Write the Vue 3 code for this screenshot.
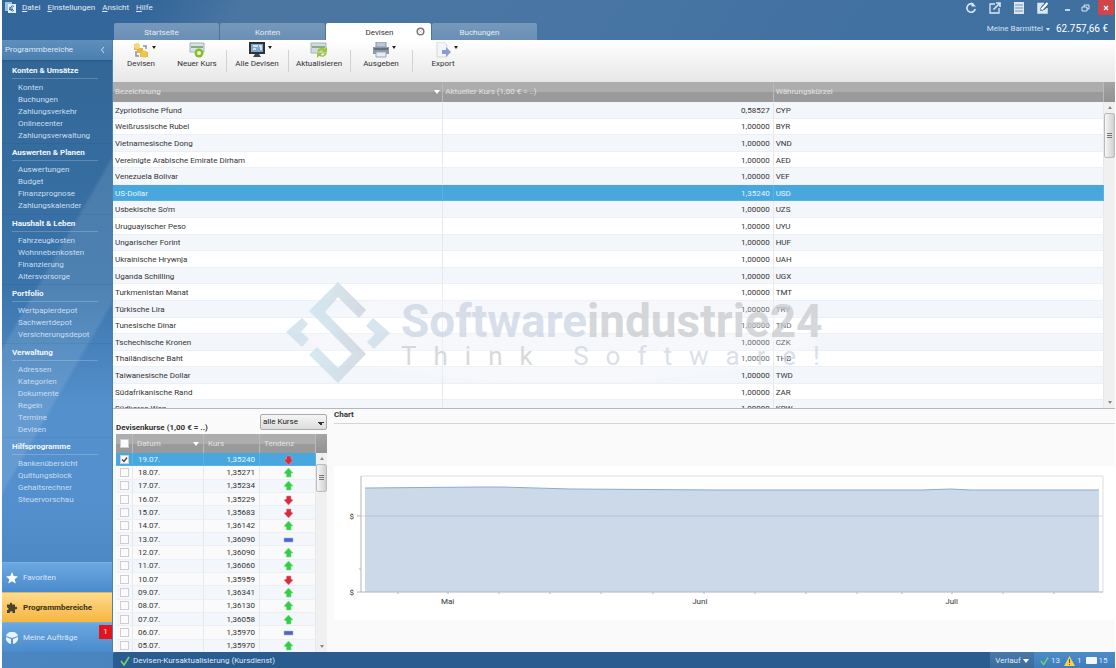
<script setup>
import { ref } from 'vue'

const menus = [['D', 'atei'], ['E', 'instellungen'], ['A', 'nsicht'], ['H', 'ilfe']]
const tabs = ['Startseite', 'Konten', 'Devisen', 'Buchungen']
const groups = [
  { title: 'Konten & Umsätze', items: ['Konten', 'Buchungen', 'Zahlungsverkehr', 'Onlinecenter', 'Zahlungsverwaltung'] },
  { title: 'Auswerten & Planen', items: ['Auswertungen', 'Budget', 'Finanzprognose', 'Zahlungskalender'] },
  { title: 'Haushalt & Leben', items: ['Fahrzeugkosten', 'Wohnnebenkosten', 'Finanzierung', 'Altersvorsorge'] },
  { title: 'Portfolio', items: ['Wertpapierdepot', 'Sachwertdepot', 'Versicherungsdepot'] },
  { title: 'Verwaltung', items: ['Adressen', 'Kategorien', 'Dokumente', 'Regeln', 'Termine', 'Devisen'] },
  { title: 'Hilfsprogramme', items: ['Bankenübersicht', 'Quittungsblock', 'Gehaltsrechner', 'Steuervorschau'] },
]
const tools = [
  { id: 'coins', label: 'Devisen', menu: true },
  { id: 'new', label: 'Neuer Kurs' },
  { id: 'screen', label: 'Alle Devisen', menu: true },
  { id: 'refresh', label: 'Aktualisieren' },
  { id: 'print', label: 'Ausgeben', menu: true },
  { id: 'export', label: 'Export', menu: true },
]
const currencies = [
  ['Zypriotische Pfund', '0,58527', 'CYP'],
  ['Weißrussische Rubel', '1,00000', 'BYR'],
  ['Vietnamesische Dong', '1,00000', 'VND'],
  ['Vereinigte Arabische Emirate Dirham', '1,00000', 'AED'],
  ['Venezuela Bolivar', '1,00000', 'VEF'],
  ['US-Dollar', '1,35240', 'USD'],
  ["Usbekische So'm", '1,00000', 'UZS'],
  ['Uruguayischer Peso', '1,00000', 'UYU'],
  ['Ungarischer Forint', '1,00000', 'HUF'],
  ['Ukrainische Hrywnja', '1,00000', 'UAH'],
  ['Uganda Schilling', '1,00000', 'UGX'],
  ['Turkmenistan Manat', '1,00000', 'TMT'],
  ['Türkische Lira', '1,00000', 'TRY'],
  ['Tunesische Dinar', '1,00000', 'TND'],
  ['Tschechische Kronen', '1,00000', 'CZK'],
  ['Thailändische Baht', '1,00000', 'THB'],
  ['Taiwanesische Dollar', '1,00000', 'TWD'],
  ['Südafrikanische Rand', '1,00000', 'ZAR'],
  ['Südkorea Won', '1,00000', 'KRW'],
]
const rates = ref([
  ['19.07.', '1,35240', 'down', true],
  ['18.07.', '1,35271', 'up', false],
  ['17.07.', '1,35234', 'up', false],
  ['16.07.', '1,35229', 'down', false],
  ['15.07.', '1,35683', 'down', false],
  ['14.07.', '1,36142', 'up', false],
  ['13.07.', '1,36090', 'flat', false],
  ['12.07.', '1,36090', 'up', false],
  ['11.07.', '1,36060', 'up', false],
  ['10.07', '1,35959', 'down', false],
  ['09.07.', '1,36341', 'up', false],
  ['08.07.', '1,36130', 'up', false],
  ['07.07.', '1,36058', 'up', false],
  ['06.07.', '1,35970', 'flat', false],
  ['05.07.', '1,35970', 'up', false],
].map(([date, rate, trend, checked]) => ({ date, rate, trend, checked })))
const ticks = [37, 87, 138, 189, 240, 292, 343, 394, 445, 496, 541, 591, 642, 693]
const selectedCurrency = ref('USD')
</script>

<template>
  <div class="window">
    <header class="top">
      <div class="titlebar">
        <svg class="logo" width="13" height="13" viewBox="0 0 13 13">
          <path d="M1 1h7v9H1z" fill="#9fc0df" /><path d="M4 3h8v9H4z" fill="#e6f0f8" />
          <path d="M10 5.500a2.500 2.500 0 1 0 0 4M5 7h4M5 8.500h4" fill="none" stroke="#3774ae" />
        </svg>
        <nav class="menu">
          <button v-for="m in menus" :key="m[0]" type="button"><u>{{ m[0] }}</u>{{ m[1] }}</button>
        </nav>
        <div class="actions">
          <button type="button" aria-label="Aktualisieren">
            <svg width="12" height="12" viewBox="0 0 12 12"><path d="M8.500 2.500A4.200 4.200 0 1 0 10.200 7" fill="none" stroke="#dbe8f3" stroke-width="1.600" /><path d="M6.500 0v4.500H11z" fill="#dbe8f3" /></svg>
          </button>
          <button type="button" aria-label="In neuem Fenster">
            <svg width="12" height="12" viewBox="0 0 12 12"><path d="M6 2H1v9h9V6" fill="none" stroke="#dbe8f3" stroke-width="1.300" /><path d="M4.500 7.500 10 2M7 1h4v4" fill="none" stroke="#dbe8f3" stroke-width="1.600" /></svg>
          </button>
          <button type="button" aria-label="Liste">
            <svg width="12" height="12" viewBox="0 0 12 12"><path d="M1 0h10v12H1z" fill="#dbe8f3" /><path d="M2 3h8M2 6h8M2 9h8" stroke="#6f94b8" /></svg>
          </button>
          <button type="button" aria-label="Bearbeiten">
            <svg width="12" height="12" viewBox="0 0 12 12"><path d="M7 1.500H1v9.500h9V6" fill="none" stroke="#dbe8f3" stroke-width="1.500" /><path d="M1 1h6L4 5 3 9l4-1 3-2v5H1z" fill="#dbe8f3" /><path d="m4.500 7.500 6-6.500" stroke="#4472a0" stroke-width="3.500" /><path d="m4.500 7.500 6-6.500" stroke="#fff" stroke-width="2" /></svg>
          </button>
          <button class="min" type="button" aria-label="Minimieren"><svg width="8" height="10" viewBox="0 0 8 10"><path d="M1 7h5" stroke="#e5eef6" stroke-width="1.600" /></svg></button>
          <button type="button" aria-label="Wiederherstellen"><svg width="9" height="10" viewBox="0 0 9 10"><path d="M1 4h5v4H1zM3 4V2h5v4H6" fill="none" stroke="#dbe8f3" /></svg></button>
          <button class="close" type="button" aria-label="Schließen"><svg width="8" height="8" viewBox="0 0 8 8"><path d="m2 2 4 4M6 2 2 6" stroke="#fff" stroke-width="1.300" /></svg></button>
        </div>
      </div>
      <div class="tabrow">
        <div class="tabs" role="tablist">
          <button v-for="t in tabs" :key="t" type="button" role="tab" :class="{ active: t === 'Devisen' }">
            {{ t }}
            <svg v-if="t === 'Devisen'" class="tabclose" width="9" height="9" viewBox="0 0 9 9"><circle cx="4.500" cy="4.500" r="3.300" fill="#fff" stroke="#777" stroke-width="1.500" /><path d="m3.500 3.500 2 2M5.500 3.500l-2 2" stroke="#bbb" /></svg>
          </button>
        </div>
        <button class="cash" type="button">Meine Barmittel <i class="tri"></i><b>62.757,66 €</b></button>
      </div>
    </header>

    <aside class="side">
      <div class="sidehead">Programmbereiche <svg width="6" height="8" viewBox="0 0 6 8"><path d="M4 1 1.500 4 4 7" fill="none" stroke="#cfe0ef" /></svg></div>
      <nav class="groups">
        <section v-for="g in groups" :key="g.title">
          <h2>{{ g.title }}</h2>
          <a v-for="i in g.items" :key="i" href="#">{{ i }}</a>
        </section>
      </nav>
      <div class="switch">
        <button type="button"><svg width="12" height="12" viewBox="0 0 12 12"><path d="m6 0 1.700 4 4.300.4-3.300 2.800 1 4.300L6 9.200l-3.700 2.300 1-4.300L0 4.400 4.300 4z" fill="#fff" /></svg>Favoriten</button>
        <button class="on" type="button"><svg width="12" height="12" viewBox="0 0 12 12"><path d="M1 2.500h3C3 0 7 0 6 2.500h3V5c3-1 3 3 0 2.300V11H6.500C7.500 8.500 3 8.500 4 11H1V8c2 .5 2-3 0-2.500z" fill="#4b442d" /></svg>Programmbereiche</button>
        <button type="button"><svg width="12" height="12" viewBox="0 0 12 12"><path d="M6 0a6 6 0 0 1 6 4L6 6 0 4a6 6 0 0 1 6-4zM0 5l5 2v5a6 6 0 0 1-5-7zM12 5 7 7v5a6 6 0 0 0 5-7z" fill="#eaf3fb" /></svg>Meine Aufträge<em>1</em></button>
      </div>
    </aside>

    <main class="main">
      <div class="toolbar">
        <button v-for="t in tools" :key="t.id" type="button">
          <span class="ico">
            <svg width="18" height="16" viewBox="0 0 18 16">
              <g v-if="t.id === 'coins'"><path d="M2 2h5v4h4v4h5v5H8v-4H5V8H2z" fill="#e6b93d" /><circle cx="5" cy="4" r="3" fill="#f5d77c" /><circle cx="12" cy="12" r="3.500" fill="#ecc54f" /><path d="M4 9v5h3M11 4h3v3" fill="none" stroke="#7e93a8" stroke-width="1.500" /></g>
              <g v-else-if="t.id === 'new'"><path d="M2 1h14v9H2z" fill="#d9e3e6" stroke="#a5b3b8" /><path d="M3 5h12" stroke="#86ab86" stroke-width="2" /><circle cx="11" cy="11" r="4.500" fill="#86bd2b" /><circle cx="11" cy="11" r="2" fill="#eef7dc" /></g>
              <g v-else-if="t.id === 'screen'"><path d="M1 0h16v12H1z" fill="#2c3238" /><path d="M3 2h12v8H3z" fill="#83a9c9" /><path d="M5 4h5M5 7h3M11 4h2v4" stroke="#e6f0f7" stroke-width="1.500" fill="none" /><path d="M7 12h4l2 3H5z" fill="#3f464c" /></g>
              <g v-else-if="t.id === 'refresh'"><path d="M1 1h15v10H1z" fill="#cfdbdf" stroke="#a5b3b8" /><path d="M2 5h13" stroke="#8aab8d" stroke-width="2" /><path d="M7 9c2-4 6-4 8-2l2-2v5h-5l1-1c-2-1-3 0-4 1zM17 11c-2 5-6 4-8 3l-2 2v-5h5l-1 2c2 1 3 0 4-2z" fill="#9cc832" /></g>
              <g v-else-if="t.id === 'print'"><path d="M4 0h10v5H4z" fill="#b9c7d6" stroke="#8897a8" /><path d="M1 5h16v7H1z" fill="#8b98a9" /><path d="M2 7h14" stroke="#56647a" stroke-width="1.500" /><path d="M4 10h10v5H4z" fill="#e8edf2" stroke="#9aa6b4" /></g>
              <g v-else><path d="M3 0h7l3 3v12H3z" fill="#f2f4f7" stroke="#d3d8df" /><path d="M8 8h4V5l5 5-5 5v-3H8z" fill="#8b9bd4" /></g>
            </svg>
            <i v-if="t.menu" class="tri dark"></i>
          </span>
          {{ t.label }}
        </button>
      </div>

      <div class="gridwrap">
        <table class="currencies">
          <thead><tr><th>Bezeichnung <i class="tri light"></i></th><th>Aktueller Kurs (1,00 € = ..)</th><th>Währungskürzel</th></tr></thead>
          <tbody>
            <tr v-for="c in currencies" :key="c[2]" :class="{ sel: c[2] === selectedCurrency }" @click="selectedCurrency = c[2]">
              <td>{{ c[0] }}</td><td class="num">{{ c[1] }}</td><td>{{ c[2] }}</td>
            </tr>
          </tbody>
        </table>
        <div class="bar tall"><i class="up"></i><span></span><i class="down"></i></div>
        <div class="mark" aria-hidden="true">
          <svg width="104" height="104" viewBox="0 0 104 104">
            <defs><linearGradient id="g" x1="0" x2="1"><stop offset="0" stop-color="#cbe6f0" /><stop offset="1" stop-color="#ced2dd" /></linearGradient></defs>
            <path d="M52 0 80 28 73 36 52 15 39 30 80 72 52 101 23 73 31 65 52 86 66 72 23 29z" fill="url(#g)" />
            <path d="m16 36 6 6-7 8 8 7-7 8L0 50zM87 36l17 15-16 16-7-7 8-8-9-8z" fill="#cddfea" />
          </svg>
          <div><strong><span>Software</span>industrie24</strong><small>Think <span>Software!</span></small></div>
        </div>
      </div>

      <div class="lower">
        <section class="history">
          <div class="hhead">
            <h3>Devisenkurse (1,00 € = ..)</h3>
            <select aria-label="Kursauswahl"><option>alle Kurse</option></select>
          </div>
          <div class="hgrid">
            <table>
              <thead><tr><th><input type="checkbox" aria-label="Alle auswählen"></th><th>Datum <i class="tri light"></i></th><th>Kurs</th><th>Tendenz</th></tr></thead>
              <tbody>
                <tr v-for="(r, n) in rates" :key="r.date" :class="{ sel: n === 0 }">
                  <td><label class="check"><input v-model="r.checked" type="checkbox" :aria-label="r.date"><svg v-if="r.checked" width="9" height="9" viewBox="0 0 9 9"><path d="m2 4.500 2 2 3-4" fill="none" stroke="#444" stroke-width="1.300" /></svg></label></td>
                  <td>{{ r.date }}</td><td class="num">{{ r.rate }}</td>
                  <td class="trend">
                    <svg width="11" height="10" viewBox="0 0 11 10">
                      <path v-if="r.trend === 'up'" d="M5.500 0 10 5H8v4H3.500V6L1 5z" fill="#2fd045" stroke="#7fdc88" stroke-width=".6" />
                      <path v-else-if="r.trend === 'down'" d="M5.500 10 1 5l2.500-1V1H8v3l2 1z" fill="#d92b3f" stroke="#e88d98" stroke-width=".6" />
                      <path v-else d="M1 3h9v4H1z" fill="#4b66c4" stroke="#a9b7e8" stroke-width=".6" />
                    </svg>
                  </td>
                </tr>
              </tbody>
            </table>
            <div class="bar"><i class="up"></i><span></span><i class="down"></i></div>
          </div>
        </section>
        <section class="chart">
          <h3>Chart</h3>
          <div class="canvas">
            <div class="ylab"><span>$</span><span>$</span></div>
            <div class="plot">
              <svg viewBox="0 0 742 120" preserveAspectRatio="none">
                <path d="M0 0h742v116M0 40h742" class="rule" />
                <path d="M4 116V12L120 11h20l70 2 150 1 200 0 30-1 20 1 128 0V116z" class="area" />
                <path d="M4 40h734" class="rule in" />
                <path d="M4 12 120 11h20l70 2 150 1h200l30-1 20 1h128" class="line" />
                <path d="M0 0v116h742M-4 40h4M-4 116h4M-2 93h2" class="axis" />
                <path v-for="t in ticks" :key="t" :d="`M${t} 116v2`" class="axis" />
              </svg>
              <div class="xlab"><span>Mai</span><span>Juni</span><span>Juli</span></div>
            </div>
          </div>
        </section>
      </div>
    </main>

    <footer class="status">
      <div class="msg"><svg width="10" height="10" viewBox="0 0 10 10"><path d="m1 5 3 4 5-8" fill="none" stroke="#72d46c" stroke-width="1.600" /></svg>Devisen-Kursaktualisierung (Kursdienst)</div>
      <button type="button">Verlauf <i class="tri light"></i></button>
      <div class="counts">
        <svg width="9" height="10" viewBox="0 0 10 10"><path d="m1 5 3 4 5-8" fill="none" stroke="#72d46c" stroke-width="1.600" /></svg><span>13</span>
        <svg width="11" height="10" viewBox="0 0 11 10"><path d="M5.500 0 11 10H0z" fill="#f5cf54" /><path d="M5.500 3v4M5.500 8v1" stroke="#6b5620" /></svg><span>1</span>
        <svg width="11" height="8" viewBox="0 0 11 8"><rect width="11" height="7" rx="1" fill="#f4f8fc" /></svg><span>15</span>
      </div>
    </footer>
  </div>
</template>

<style>
body { margin: 0; background: #fff; }
</style>

<style scoped>
* { box-sizing: border-box; }
.window {
  margin: 0 1px 0 2px;
  height: 100vh;
  min-height: 668px;
  display: grid;
  grid-template: 40px minmax(0, 1fr) 16px / 111px minmax(0, 1fr);
  font: 8px/12px Roboto, "Noto Sans", sans-serif;
  color: #333;
  background: #fff;
}
button { font: inherit; color: inherit; border: 0; padding: 0; background: none; }
h2, h3 { margin: 0; font-size: 8px; font-weight: 700; line-height: 12px; }
svg { flex: none; }
.tri { display: inline-block; width: 0; height: 0; border: 2px solid transparent; border-top: 3px solid #d7e5f1; border-bottom: 0; }
.tri.dark { border-top-color: #222; }
.tri.light { border-width: 4px 3px 0; border-top-color: #fff; }

.top {
  grid-column: 1 / 3;
  display: flex;
  flex-direction: column;
  color: #e3edf5;
  background: linear-gradient(120deg, #33669a 0 130px, #4a76a1 210px 290px, #4875a4 480px, #3d6f9f);
}
.titlebar { display: flex; height: 24px; align-items: flex-start; }
.logo { margin: 1px 5px 0 2px; }
.menu { display: flex; gap: 7px; flex: 1; padding-top: 2px; }
.actions { display: flex; gap: 12px; align-items: center; height: 15px; margin-right: 1px; }
.actions button { display: flex; }
.actions .min { margin-left: 3px; }
.actions .min + button { margin-left: -3px; }
.actions .close { width: 16px; height: 15px; background: #cf4548; align-items: center; justify-content: center; margin-left: -4px; }
.tabrow { display: flex; flex: 1; justify-content: space-between; padding-left: 112px; }
.tabs { display: flex; gap: 1px; }
.tabs button { width: 105px; background: linear-gradient(#7698ba, #6a8fb6); border-radius: 2px 2px 0 0; position: relative; padding: 2px 10px 0 0; }
.tabs button.active { background: #fff; color: #333; padding: 2px 0 0 2px; }
.tabclose { position: absolute; right: 6px; top: 4px; }
.cash { display: flex; align-items: center; gap: 3px; padding: 0 7px 5px 0; color: #d3e1ee; }
.cash b { font-weight: 400; font-size: 10px; margin-left: 3px; color: #fff; }

.side {
  display: flex;
  flex-direction: column;
  border-right: 1px solid #4b80b2;
  color: #dce9f5;
  background: linear-gradient(120deg, transparent 0 38%, #ffffff1a 39% 56%, transparent 57%), linear-gradient(#316594, #3a74ab 40%, #5490cc 60%, #5390cd 75%, #467fb9);
}
.sidehead { display: flex; justify-content: space-between; align-items: center; height: 21px; padding: 0 6px 0 3px; background: linear-gradient(#5f8fbb, #4a7fb0); border-bottom: 1px solid #2c5c8a; }
.groups { display: flex; flex-direction: column; justify-content: space-between; flex: 0 0 445px; }
.groups section { display: flex; flex-direction: column; border-top: 1px solid #00305012; padding-top: 3px; }
.groups h2 { color: #f2f7fb; margin: 0 14px 3px 10px; height: 14px; border-bottom: 1px solid #ffffff35; white-space: nowrap; }
.groups a { color: #c9def1; text-decoration: none; margin-left: 16px; }
.switch { margin-top: auto; display: grid; grid-auto-rows: 30px; }
.switch button { display: flex; align-items: center; gap: 5px; padding-left: 4px; position: relative; background: linear-gradient(#6ba8e0, #4a8bcd); border-top: 1px solid #79b0e2; }
.switch .on { background: linear-gradient(#fddc8e, #f6b53f); color: #3d3115; font-weight: 700; border-color: #e5b657; }
.switch em { position: absolute; right: 0; top: 2px; width: 13px; height: 14px; background: #e3141b; color: #fff; font-style: normal; line-height: 14px; text-align: center; }

.main { display: flex; flex-direction: column; background: #fafafa; min-width: 0; }
.toolbar { display: flex; height: 42px; background: linear-gradient(#fff, #e7e7e7); }
.toolbar button { width: 62px; display: flex; flex-direction: column; align-items: center; padding-top: 2px; line-height: 12px; position: relative; }
.toolbar button:nth-child(-n+2) { width: 56px; }
.toolbar button:nth-child(n+3) { left: 1px; }
.toolbar button:nth-child(n+3)::before { content: ""; position: absolute; left: 0; top: 10px; height: 22px; border-left: 1px solid #d2d2d2; }
.ico { height: 16px; position: relative; }
.ico .tri { position: absolute; right: -6px; top: 4px; }

.gridwrap { flex: 0 0 327px; display: flex; overflow: hidden; position: relative; border-bottom: 1px solid #b5b7bb; background: #fff; }
table { border-collapse: collapse; display: block; flex: 1; min-width: 0; }
thead { display: block; }
th { font-weight: 400; text-align: left; color: #e2e2e2; padding: 0 2px; border-right: 1px solid #b9b9b9; display: flex; align-items: center; justify-content: space-between; }
tbody { display: grid; grid-auto-rows: 1fr; }
tr { display: grid; }
thead tr { background: linear-gradient(#adadad 0 50%, #9a9a9a 52% 100%); }
td { padding: 0 3px 0 2px; display: flex; align-items: center; border-right: 1px solid #e5e9ee; border-bottom: 1px solid #eceff3; min-width: 0; white-space: nowrap; }
td.num { justify-content: flex-end; }
tbody tr:nth-child(odd) { background: #f3f6fa; }
tbody tr.sel { background: #48a8de; color: #e5f4fd; }
tr.sel td { border-color: #58b3e4; }
.currencies tr { grid-template-columns: 1fr 1fr 1fr; }
.currencies thead tr { height: 20px; }
.currencies tbody { height: 315px; }
.currencies td { padding-top: 2px; }

.bar { width: 11px; background: #f0f0f0; display: flex; flex-direction: column; align-items: center; }
.bar::before { content: ""; align-self: stretch; height: 19px; flex: none; background: linear-gradient(#a5a5a5, #929292); }
.bar i { width: 0; border: 2px solid transparent; margin: 4px 0; }
.bar .up { border-bottom: 3px solid #888; border-top: 0; }
.bar .down { border-top: 3px solid #888; border-bottom: 0; margin-top: auto; }
.bar span { width: 11px; height: 28px; flex: none; border: 1px solid #bbb; border-radius: 2px; background: linear-gradient(90deg, #f6f6f6, #d0d0d0); }
.bar.tall::before { height: 20px; }
.bar.tall span { height: 45px; }
.bar span::after { content: ""; display: block; width: 5px; height: 5px; margin: 10px 2px; background: repeating-linear-gradient(#777 0 1px, transparent 1px 2px); }
.bar.tall span::after { margin-top: 19px; }

.mark { position: absolute; left: 173px; top: 200px; display: flex; gap: 11px; background: radial-gradient(closest-side, #ffffff50 90%, transparent); opacity: .8; pointer-events: none; }
.mark strong { display: block; font-size: 46px; line-height: 46px; margin-top: 16px; color: #ccced1; font-weight: 700; }
.mark strong span { color: #cfd8e6; }
.mark small { display: block; font-size: 26px; line-height: 24px; letter-spacing: 17px; color: #cfd0d2; white-space: nowrap; }
.mark small span { color: #d3d8e6; }

.lower { display: flex; flex: 1; min-height: 0; overflow: hidden; }
.history { width: 211px; margin: 0 7px 0 3px; display: flex; flex-direction: column; }
.hhead { display: flex; justify-content: space-between; height: 25px; }
.hhead h3 { align-self: flex-end; white-space: nowrap; }
.hhead select { width: 67px; height: 16px; margin: 5px 0 0; padding: 0 2px; font: inherit; color: #222; border: 1px solid #aaa; border-radius: 2px; appearance: none; background: linear-gradient(45deg, transparent 50%, #333 50%) 57px 7px / 3px 3px no-repeat, linear-gradient(-45deg, transparent 50%, #333 50%) 60px 7px / 3px 3px no-repeat, linear-gradient(#f5f5f5, #dcdcdc); }
.hgrid { display: flex; flex: 1; min-height: 0; }
.hgrid tr { grid-template-columns: 17px 71px 56px 1fr; }
.hgrid thead tr { height: 19px; }
.hgrid tbody { height: 200px; }
.hgrid td { padding: 1px 4px 0 5px; line-height: 10px; }
.hgrid th { padding: 0 4px; }
.hgrid td.trend { justify-content: center; }
.hgrid input { appearance: none; display: block; width: 9px; height: 9px; margin: 0; flex: none; border: 1px solid #ccd0d6; background: #fbfbfb; }
.hgrid td:first-child { padding: 0 4px; }
.check { display: grid; }
.check > * { grid-area: 1 / 1; }

.chart { flex: 1; min-width: 0; display: flex; flex-direction: column; }
.chart h3 { height: 15px; border-bottom: 1px solid #d8d4d4; }
.canvas { margin-top: 42px; padding: 10px 12px 0 0; height: 154px; display: flex; background: #fff; }
.ylab { width: 27px; display: flex; flex-direction: column; gap: 64px; align-items: flex-end; padding: 35px 7px 0 0; }
.plot { flex: 1; min-width: 0; }
.plot svg { display: block; width: 100%; height: 120px; overflow: visible; }
.plot path { fill: none; vector-effect: non-scaling-stroke; }
.plot .rule { stroke: #ddd; }
.plot .rule.in { stroke: #b4c4d8; }
.plot .area { fill: #cbd9e9; }
.plot .line { stroke: #8fabd2; }
.plot .axis { stroke: #b0b4ba; }
.xlab { display: flex; justify-content: space-between; padding: 0 145px 0 80px; }

.status { grid-column: 1 / 3; display: flex; color: #dfeaf5; background: linear-gradient(90deg, #4b86c0, #3b75ae); padding-left: 111px; }
.msg { flex: 1; display: flex; align-items: center; gap: 3px; padding: 1px 0 0 7px; background: #2b5c8f; border-radius: 3px 0 0 0; }
.status button { width: 44px; background: linear-gradient(#4a79a8, #3b6c9c); white-space: nowrap; padding-top: 1px; }
.counts { width: 81px; display: flex; align-items: center; gap: 2px; padding: 1px 5px 0 6px; background: linear-gradient(#4d8cca, #3f7dba); }
.counts span + svg { margin-left: 2px; }
</style>
